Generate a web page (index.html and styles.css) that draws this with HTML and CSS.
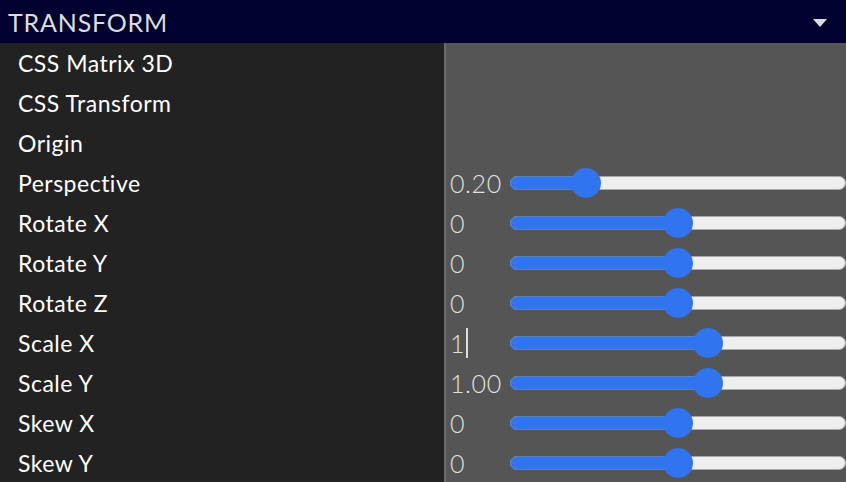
FILE: index.html
```html
<!DOCTYPE html>
<html>
<head>
<meta charset="utf-8">
<link rel="stylesheet" href="styles.css">
</head>
<body>
<div class="panel">
  <header class="head">
    <span class="title">TRANSFORM</span>
    <svg class="caret-down" width="14" height="8" viewBox="0 0 14 8"><polygon points="0,0 14,0 7,8" fill="#dddddd"/></svg>
  </header>
  <div class="body">
    <ul class="labels">
      <li>CSS Matrix 3D</li>
      <li>CSS Transform</li>
      <li>Origin</li>
      <li>Perspective</li>
      <li>Rotate X</li>
      <li>Rotate Y</li>
      <li>Rotate Z</li>
      <li>Scale X</li>
      <li>Scale Y</li>
      <li>Skew X</li>
      <li>Skew Y</li>
    </ul>
    <div class="divider"></div>
    <div class="controls">
      <div class="row"></div>
      <div class="row"></div>
      <div class="row"></div>
      <div class="row"><span class="val">0.20</span><div class="slider"><div class="fill" style="width:76px"></div><div class="thumb" style="left:61px"></div></div></div>
      <div class="row"><span class="val">0</span><div class="slider"><div class="fill" style="width:168px"></div><div class="thumb" style="left:153px"></div></div></div>
      <div class="row"><span class="val">0</span><div class="slider"><div class="fill" style="width:168px"></div><div class="thumb" style="left:153px"></div></div></div>
      <div class="row"><span class="val">0</span><div class="slider"><div class="fill" style="width:168px"></div><div class="thumb" style="left:153px"></div></div></div>
      <div class="row"><span class="val">1<span class="cursor"></span></span><div class="slider"><div class="fill" style="width:198px"></div><div class="thumb" style="left:183px"></div></div></div>
      <div class="row"><span class="val">1.00</span><div class="slider"><div class="fill" style="width:198px"></div><div class="thumb" style="left:183px"></div></div></div>
      <div class="row"><span class="val">0</span><div class="slider"><div class="fill" style="width:168px"></div><div class="thumb" style="left:153px"></div></div></div>
      <div class="row"><span class="val">0</span><div class="slider"><div class="fill" style="width:168px"></div><div class="thumb" style="left:153px"></div></div></div>
    </div>
  </div>
</div>
</body>
</html>
```
FILE: styles.css
```css
* { box-sizing: border-box; }
html, body {
  margin: 0;
  padding: 0;
  background: #555555;
  overflow: hidden;
}
body {
  width: 846px;
  height: 482px;
  font-family: Lato, "Noto Sans", sans-serif;
}
.panel {
  display: flex;
  flex-direction: column;
  height: 482px;
}
.head {
  height: 43px;
  flex: none;
  background: #020230;
  display: flex;
  align-items: center;
  justify-content: space-between;
  padding: 0 19px 0 8px;
}
.title {
  color: #dcdcdc;
  font-size: 25px;
  letter-spacing: 0.8px;
  line-height: 1;
  padding-top: 1px;
}
.caret-down { display: block; margin-top: 2px; }
.body {
  flex: 1;
  display: grid;
  grid-template-columns: 444px 2px 1fr;
  overflow: hidden;
}
.labels {
  list-style: none;
  margin: 0;
  padding: 0;
  background: #222222;
}
.labels li {
  height: 40px;
  line-height: 40px;
  padding-left: 18px;
  color: #ffffff;
  font-size: 23px;
  letter-spacing: 0.5px;
}
.divider { background: #6a6a6a; }
.controls { background: #555555; }
.row {
  height: 40px;
  display: flex;
  align-items: center;
}
.val {
  width: 64px;
  flex: none;
  padding-left: 4px;
  color: #e2e2e2;
  font-size: 25px;
  font-weight: 300;
  letter-spacing: 0.6px;
  display: flex;
  align-items: center;
}
.cursor {
  display: inline-block;
  width: 2px;
  height: 30px;
  background: #dddddd;
  margin-left: 1px;
}
.slider {
  position: relative;
  flex: 1;
  height: 14px;
  border-radius: 7px;
  background: #eeeeee;
  border: 1px solid #a8a8a8;
}
.fill {
  position: absolute;
  left: -1px;
  top: -1px;
  bottom: -1px;
  background: #3074f0;
  border: 1px solid #5b7fb8;
  border-radius: 7px 0 0 7px;
}
.thumb {
  position: absolute;
  top: -9px;
  width: 30px;
  height: 30px;
  margin-left: -1px;
  border-radius: 50%;
  background: #3074f0;
}
```
